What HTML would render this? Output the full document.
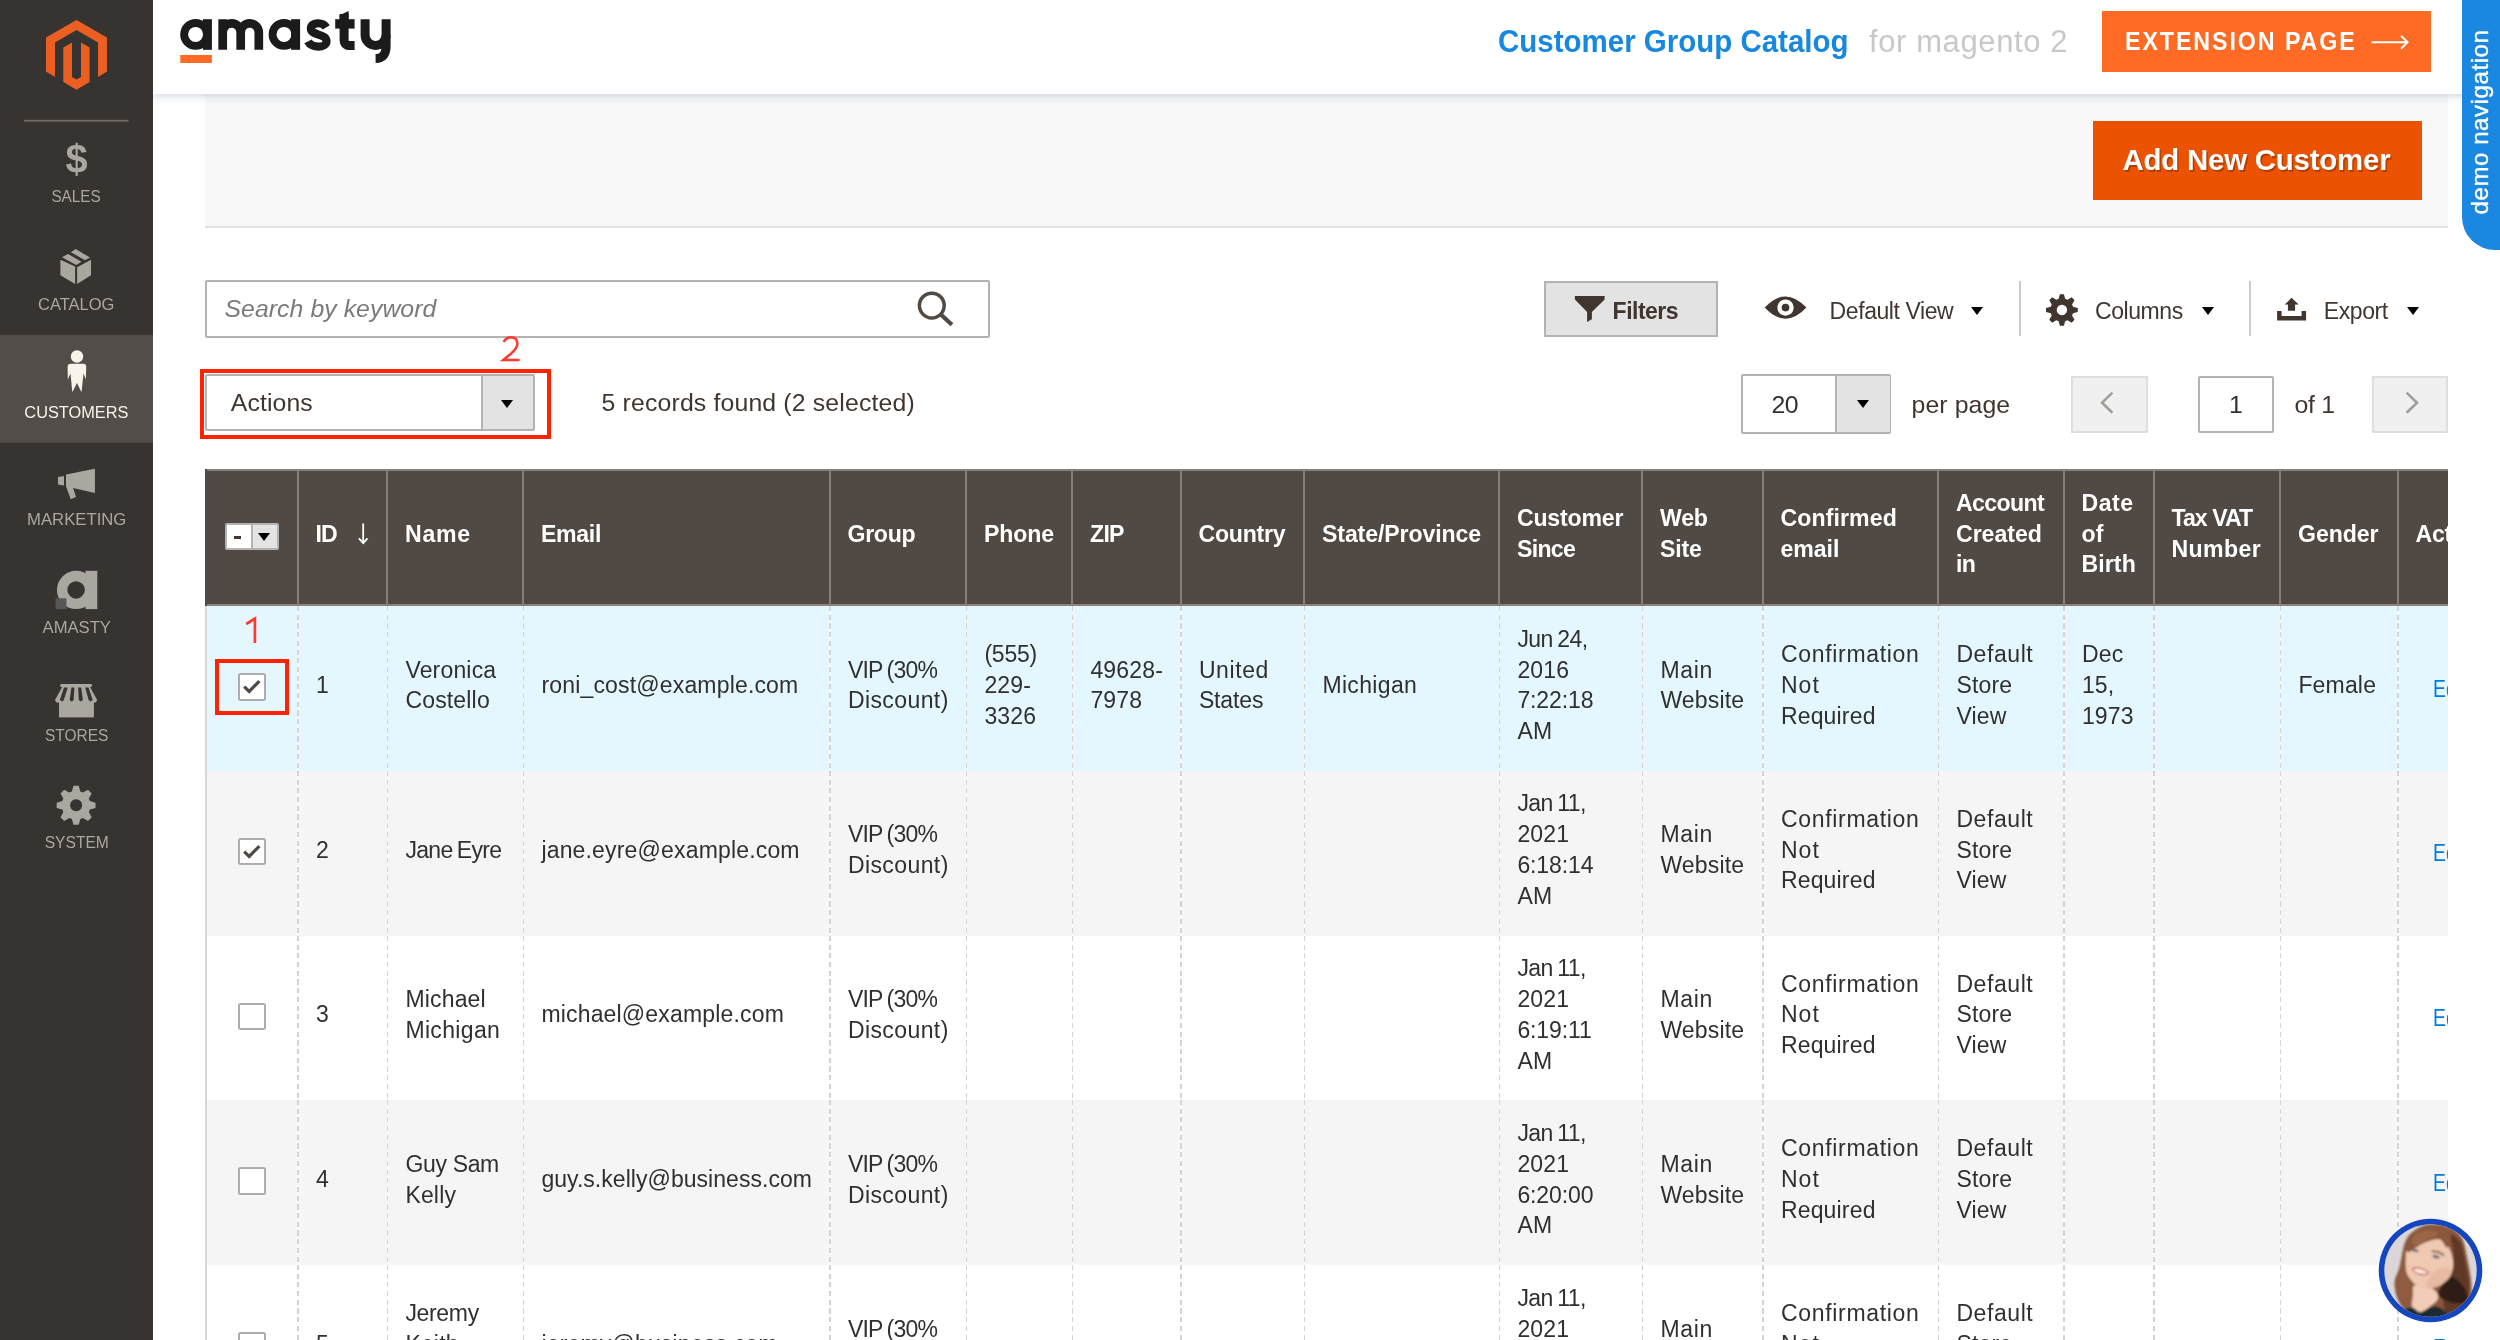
<!DOCTYPE html><html><head><meta charset='utf-8'><title>Customers</title><style>
*{box-sizing:border-box;margin:0;padding:0}
html,body{width:2500px;height:1340px;background:#fff}
body{position:relative;font-family:"Liberation Sans",sans-serif;color:#303030;-webkit-font-smoothing:antialiased}
#pg{position:absolute;left:0;top:0;width:2500px;height:1340px;overflow:hidden;will-change:transform;background:#fff}
.abs{position:absolute}
.t{position:absolute;white-space:nowrap;line-height:1}
#sidebar{position:absolute;left:0;top:0;width:153px;height:1340px;background:#373330;z-index:5}
.ml{position:absolute;left:0;width:153px;text-align:center;font-size:17.4px;line-height:20px;color:#aaa6a0;white-space:nowrap}
.ml span{display:inline-block;transform-origin:50% 50%}
#hdr{position:absolute;left:153px;top:0;width:2347px;height:94px;background:#fff;z-index:3;box-shadow:0 2px 8.5px rgba(120,140,160,.36)}
#gray{position:absolute;left:205px;top:94px;width:2243px;height:133.5px;background:#f8f8f8;border-bottom:2px solid #e3e3e3}
.th{position:absolute;top:0;height:137px;border-left:2px solid #857e7a;color:#fff;font-weight:700;font-size:23.1px;line-height:30.4px;display:flex;align-items:center;padding-left:16.6px;padding-bottom:7.6px;white-space:nowrap}
.row{position:absolute;left:205px;width:2243px;height:164.8px;overflow:hidden}
.vs{position:absolute;left:0;top:0;width:1.74px;height:100%;background:repeating-linear-gradient(to bottom,#d4d4d4 0,#d4d4d4 5.1px,rgba(255,255,255,.7) 5.1px,rgba(255,255,255,.7) 8.7px)}
.td{position:absolute;top:0;height:164.8px;border-left:1px solid transparent;font-size:23px;line-height:30.8px;display:flex;align-items:center;padding-left:18.4px;padding-bottom:6.2px;white-space:nowrap;letter-spacing:.17px;color:#303030}
i{font-style:normal}
.cb{position:absolute;left:33px;width:27.6px;height:27.6px;border:2px solid #adadad;border-radius:2.5px;background:#fff}
.tri{position:absolute;width:0;height:0;border-left:6.9px solid transparent;border-right:6.9px solid transparent;border-top:8.6px solid #000}
.tb{font-size:23px;color:#41362f;letter-spacing:-.42px}
</style></head><body><div id='pg'>
<div id='sidebar'>
<svg class='abs' style='left:0;top:0' width='153' height='900' viewBox='0 0 153 900'>
<path fill='#eb5f22' d='M76.5,20 L107,37.5 L107,71.5 L98,77 L98,42.6 L76.5,30 L55,42.6 L55,77 L46,71.5 L46,37.5Z'/>
<path fill='#eb5f22' d='M63.3,47.5 L72,42.5 L72,77 L76.5,79.6 L81,77 L81,42.5 L89.6,47.5 L89.6,82 L76.5,89.8 L63.3,82Z'/>
<rect x='24' y='119.8' width='104.5' height='1.8' fill='#736b66'/>
<rect x='0' y='335' width='153' height='107.7' fill='#524d49'/>
<g fill='#aaa6a0'>
<path d='M60.4,259.7 L75.1,266.6 L75.1,283.9 L60.4,275.2Z'/>
<path d='M77.1,267.2 L91,259.7 L91,275.2 L77.1,283.9Z'/>
<path d='M62,257.3 L68,253.9 L81.4,261.8 L76.3,265Z'/>
<path d='M70.9,252.2 L75.7,249 L90,257.6 L85,260.3Z'/>
<path d='M58,476.9 L64,475.9 L64,485.6 L58,484.4Z'/>
<path d='M66,474.5 L94.9,468.7 L94.9,493 L73.1,487.9 L76,497 L70.7,499.2 L66,486.3Z'/>
<circle cx='76.1' cy='589.95' r='19.15'/><rect x='85.5' y='570.8' width='11.8' height='38.3'/><circle cx='76.1' cy='589.95' r='8.7' fill='#373330'/>
<rect x='60.3' y='684.1' width='31.6' height='2.9' rx='1'/>
<path d='M62.3,686.8 L89.9,686.8 L96.9,699.5 Q97.2,702.6 94.5,702.6 L57.7,702.6 Q55,702.6 55.3,699.5Z'/>
<rect x='59' y='702' width='34.9' height='15.4'/>
</g>
<path fill='#373330' d='M64.0,687.5 L67.7,687.5 L64.0,699.5 Q62.0,703.5 60.0,699.5Z'/>
<path fill='#373330' d='M71.4,687.5 L74.4,687.5 L73.7,699.5 Q71.7,703.5 69.7,699.5Z'/>
<path fill='#373330' d='M78.1,687.5 L81.2,687.5 L82.8,699.5 Q80.8,703.5 78.8,699.5Z'/>
<path fill='#373330' d='M85.2,687.5 L88.5,687.5 L92.5,699.5 Q90.5,703.5 88.5,699.5Z'/>
<rect x='55.6' y='598.3' width='10.8' height='10.8' fill='#575757'/>
<path fill='#aaa6a0' fill-rule='evenodd' d='M71.87,791.54 L73.49,785.87 L78.71,785.87 L80.33,791.54 L82.84,792.57 L87.99,789.72 L91.68,793.41 L88.83,798.56 L89.86,801.07 L95.53,802.69 L95.53,807.91 L89.86,809.53 L88.83,812.04 L91.68,817.19 L87.99,820.88 L82.84,818.03 L80.33,819.06 L78.71,824.73 L73.49,824.73 L71.87,819.06 L69.36,818.03 L64.21,820.88 L60.52,817.19 L63.37,812.04 L62.34,809.53 L56.67,807.91 L56.67,802.69 L62.34,801.07 L63.37,798.56 L60.52,793.41 L64.21,789.72 L69.36,792.57Z M76.1,799.3 a6,6 0 1 0 0.01,0Z'/>
<g fill='#f7f3eb'><circle cx='77' cy='356.5' r='6.2'/>
<path d='M71,363.8 L83.2,363.8 Q86.2,363.8 86.2,366.9 L85.9,379.4 L83.5,373.6 L81.5,392.2 L77,383 L72.3,392.2 L70.5,373.6 L67.8,379.4 L67.6,366.9 Q67.6,363.8 71,363.8Z'/></g>
</svg>
<div class='t' style='left:0;width:153px;text-align:center;top:136px;font-size:39.8px;font-weight:700;color:#aaa6a0;line-height:46px'>$</div>
<div class='ml' style='top:186.0px;color:#aaa6a0'><span style='transform:scaleX(0.879)'>SALES</span></div>
<div class='ml' style='top:293.9px;color:#aaa6a0'><span style='transform:scaleX(0.948)'>CATALOG</span></div>
<div class='ml' style='top:401.6px;color:#f7f3eb'><span style='transform:scaleX(0.940)'>CUSTOMERS</span></div>
<div class='ml' style='top:508.7px;color:#aaa6a0'><span style='transform:scaleX(0.961)'>MARKETING</span></div>
<div class='ml' style='top:616.9px;color:#aaa6a0'><span style='transform:scaleX(0.957)'>AMASTY</span></div>
<div class='ml' style='top:724.6px;color:#aaa6a0'><span style='transform:scaleX(0.891)'>STORES</span></div>
<div class='ml' style='top:831.9px;color:#aaa6a0'><span style='transform:scaleX(0.896)'>SYSTEM</span></div>
</div>
<div id='hdr'></div>
<div class='abs' style='left:0;top:0;width:2500px;height:94px;z-index:4'>
<svg class='abs' style='left:170px;top:0' width='240' height='80' viewBox='170 0 240 80'>
<g fill='none' stroke='#1b1b1b'>
<circle cx='195.6' cy='34.4' r='11.45' stroke-width='7.9'/>
<path d='M207.4,19.2 V49.8' stroke-width='9'/>
<path d='M222.7,19.2 V49.8 M222.7,32.4 a9,9 0 0 1 18,0 V49.8 M240.7,32.4 a9.05,9.05 0 0 1 18.1,0 V49.8' stroke-width='8.7'/>
<circle cx='284' cy='34.4' r='11.45' stroke-width='7.9'/>
<path d='M295.6,19.2 V49.8' stroke-width='9'/>
<path d='M326.3,27.4 C322.8,21.6 310.6,21.8 310.9,28.8 C311.2,35.8 326.6,33.4 326.5,41.2 C326.3,48.6 311.4,48.4 308,41.4' stroke-width='8.2'/>
<path d='M344.1,14 V39.5 Q344.1,45.6 350,45.6 H354.6' stroke-width='9'/>
<path d='M335.2,23.9 H354.6' stroke-width='9.4'/>
<path d='M365.1,19.2 V35 a10.5,10.5 0 0 0 21,0' stroke-width='9'/>
<path d='M386.1,19.2 V46 Q386.1,58.5 375.6,58.6' stroke-width='9'/>
</g>
<path fill='#1b1b1b' d='M339.6,15.2 L348.6,11 L348.6,20 L339.6,20Z'/>
<rect x='180.3' y='55' width='31.6' height='8' fill='#ff6a24'/>
</svg>
<div class='t' style='left:1497.5px;top:25.6px;font-size:31px;font-weight:700;color:#1787e0;letter-spacing:0;transform-origin:0 50%;transform:scaleX(.951)'>Customer Group Catalog</div>
<div class='t' style='left:1869px;top:25.6px;font-size:31px;color:#c8c8c8;letter-spacing:.6px'>for magento 2</div>
<div class='abs' style='left:2102.3px;top:11.3px;width:328.3px;height:60.5px;background:#ff6a24'></div>
<div class='t' style='left:2125px;top:28.9px;font-size:25.4px;font-weight:700;color:#fff;letter-spacing:2.1px;transform-origin:0 50%;transform:scaleX(.915)'>EXTENSION PAGE</div>
<svg class='abs' style='left:2368px;top:30px' width='46' height='26' viewBox='2368 30 46 26'><path d='M2371.6,42.3 H2407.2 M2401,35.8 L2407.6,42.3 L2401,48.8' fill='none' stroke='#fff' stroke-width='1.9'/></svg>
</div>
<div class='abs' style='left:2461.7px;top:0;width:60px;height:250px;background:#1a88e1;border-radius:0 0 0 33px;z-index:6'></div>
<div class='t' style='left:2480px;top:122px;z-index:7;font-size:24px;color:#fff;transform:translate(-50%,-50%) rotate(-90deg);letter-spacing:.58px;-webkit-text-stroke:.35px #fff'>demo navigation</div>
<div id='gray'></div>
<div class='abs' style='left:2093px;top:120.7px;width:328.8px;height:79.5px;background:#eb5202'></div>
<div class='t' style='left:2122.5px;top:145px;font-size:29.4px;font-weight:700;color:#fff;letter-spacing:-.2px;text-shadow:1.5px 1.5px 0 rgba(0,0,0,.25)'>Add New Customer</div>
<div class='abs' style='left:205px;top:280px;width:784.5px;height:57.5px;border:2px solid #b3b3b3;border-radius:2px;background:#fff'></div>
<div class='t' style='left:224.5px;top:297px;font-size:24.8px;font-style:italic;color:#7a7a7a;letter-spacing:.06px'>Search by keyword</div>
<svg class='abs' style='left:910px;top:285px' width='50' height='46' viewBox='910 285 50 46'><circle cx='931.8' cy='305.6' r='12.4' fill='none' stroke='#514943' stroke-width='3.5'/><path d='M940.6,314.2 L951.9,324.7' stroke='#514943' stroke-width='4.2' fill='none'/></svg>
<div class='abs' style='left:1543.6px;top:280.6px;width:174px;height:56.8px;background:#e3e3e3;border:2px solid #b3b3b3'></div>
<svg class='abs' style='left:1570px;top:290px' width='40' height='36' viewBox='1570 290 40 36'><path fill='#41362f' d='M1574.9,296.1 L1604.6,296.1 L1604.6,299.4 L1591.9,312.1 L1591.9,319.3 L1587.1,321.9 L1587.1,312.1 L1574.9,299.4Z'/></svg>
<div class='t tb' style='left:1612.6px;top:299.9px;font-weight:700;font-size:23px;letter-spacing:-.5px'>Filters</div>
<svg class='abs' style='left:1760px;top:290px' width='52' height='36' viewBox='1760 290 52 36'><path fill='#41362f' fill-rule='evenodd' d='M1764.7,307.6 Q1785.5,285.2 1806.4,307.6 Q1785.5,330 1764.7,307.6Z M1785.5,299.5 a8.1,8.1 0 1 0 0.01,0Z'/><circle cx='1785.5' cy='307.6' r='3.85' fill='#41362f'/></svg>
<div class='t tb' style='left:1829.6px;top:299.9px'>Default View</div>
<div class='tri' style='left:1971.2px;top:307px'></div>
<div class='abs' style='left:2018.8px;top:280.6px;width:1.8px;height:55px;background:#ccc'></div>
<svg class='abs' style='left:2040px;top:290px' width='44' height='40' viewBox='2040 290 44 40'><path fill='#41362f' fill-rule='evenodd' d='M2058.66,298.86 L2059.89,294.13 L2063.91,294.13 L2065.14,298.86 L2067.49,299.83 L2071.71,297.36 L2074.54,300.19 L2072.07,304.41 L2073.04,306.76 L2077.77,307.99 L2077.77,312.01 L2073.04,313.24 L2072.07,315.59 L2074.54,319.81 L2071.71,322.64 L2067.49,320.17 L2065.14,321.14 L2063.91,325.87 L2059.89,325.87 L2058.66,321.14 L2056.31,320.17 L2052.09,322.64 L2049.26,319.81 L2051.73,315.59 L2050.76,313.24 L2046.03,312.01 L2046.03,307.99 L2050.76,306.76 L2051.73,304.41 L2049.26,300.19 L2052.09,297.36 L2056.31,299.83Z M2061.9,304.8 a5.2,5.2 0 1 0 0.01,0Z'/></svg>
<div class='t tb' style='left:2095px;top:299.9px'>Columns</div>
<div class='tri' style='left:2202.1px;top:307px'></div>
<div class='abs' style='left:2249.2px;top:280.6px;width:1.8px;height:55px;background:#ccc'></div>
<svg class='abs' style='left:2272px;top:292px' width='40' height='34' viewBox='2272 292 40 34'><path fill='#41362f' d='M2277.1,311.1 H2281.6 V316.1 H2301.6 V311.1 H2306.1 V320.6 H2277.1Z M2291.5,297.8 L2298.7,304.6 H2295.1 V310.8 H2287.9 V304.6 H2284.8Z'/></svg>
<div class='t tb' style='left:2323.8px;top:299.9px'>Export</div>
<div class='tri' style='left:2407px;top:307px'></div>
<div class='abs' style='left:200px;top:369px;width:351px;height:70px;border:4px solid #ff2300'></div>
<svg class='abs' style='left:495px;top:330px' width='32' height='36' viewBox='495 330 32 36'><path d='M503.6,341.8 Q506.5,337.2 511,337.2 Q517.4,337.4 517.4,343.6 Q517.4,348 511.5,353.2 L503.2,360 H519.6' fill='none' stroke='#ff3a2d' stroke-width='2.5'/></svg>
<div class='abs' style='left:205px;top:374.4px;width:330px;height:56.3px;border:2px solid #b3b3b3;background:#fff;border-radius:2px'></div>
<div class='abs' style='left:480.6px;top:376.2px;width:52.6px;height:52.7px;background:#e3e3e3;border-left:2px solid #b3b3b3'></div>
<div class='t' style='left:230.8px;top:391.3px;font-size:24.8px;color:#41362f;letter-spacing:.1px'>Actions</div>
<div class='tri' style='left:501.3px;top:399.6px'></div>
<div class='t' style='left:601.6px;top:391.3px;font-size:24.8px;color:#41362f;letter-spacing:.16px'>5 records found (2 selected)</div>
<div class='abs' style='left:1741px;top:374.4px;width:150.3px;height:59.2px;border:2px solid #b3b3b3;background:#fff;border-radius:2px'></div>
<div class='abs' style='left:1834.5px;top:376.2px;width:55px;height:55.6px;background:#e3e3e3;border-left:2px solid #b3b3b3'></div>
<div class='t' style='left:1771.5px;top:392.6px;font-size:24.8px;color:#303030;letter-spacing:-.6px'>20</div>
<div class='tri' style='left:1856.6px;top:400px'></div>
<div class='t' style='left:1911.5px;top:392.6px;font-size:24.8px;color:#41362f;letter-spacing:.1px'>per page</div>
<div class='abs' style='left:2071.4px;top:376px;width:76.3px;height:56.6px;background:#f0f0f0;border:2px solid #dedede'></div>
<div class='abs' style='left:2371.6px;top:376px;width:76.4px;height:56.6px;background:#f0f0f0;border:2px solid #dedede'></div>
<svg class='abs' style='left:2090px;top:385px' width='340' height='36' viewBox='2090 385 340 36'><path d='M2112.4,392.6 L2102,402.7 L2112.4,412.8 M2406.6,392.6 L2417,402.7 L2406.6,412.8' fill='none' stroke='#a39e9a' stroke-width='2.6'/></svg>
<div class='abs' style='left:2198px;top:376px;width:76px;height:56.6px;background:#fff;border:2px solid #b3b3b3;border-radius:2px'></div>
<div class='t' style='left:2198px;width:76px;text-align:center;top:392.6px;font-size:24.8px;color:#303030'>1</div>
<div class='t' style='left:2294.5px;top:392.6px;font-size:24.8px;color:#41362f;letter-spacing:-.3px'>of 1</div>
<div class='abs' style='left:205px;top:469px;width:2243px;height:871px;overflow:hidden'>
<div class='abs' style='left:0;top:0;width:2243px;height:136.9px;background:#514943;border-top:2px solid #857e7a;border-bottom:2px solid #8a837f'></div>
<div class='th' style='left:0.0px;width:92.5px;border-left:2px solid #514943;'><span></span></div>
<div class='th' style='left:91.9px;width:89.5px;'><span><i style='letter-spacing:-0.8px'>ID</i></span></div>
<div class='th' style='left:181.4px;width:136.0px;'><span><i style='letter-spacing:0.75px'>Name</i></span></div>
<div class='th' style='left:317.4px;width:306.5px;'><span><i style='letter-spacing:-0.3px'>Email</i></span></div>
<div class='th' style='left:623.9px;width:136.5px;'><span><i style='letter-spacing:-0.3px'>Group</i></span></div>
<div class='th' style='left:760.4px;width:106.0px;'><span><i style='letter-spacing:-0.1px'>Phone</i></span></div>
<div class='th' style='left:866.4px;width:108.5px;'><span><i style='letter-spacing:-0.7px'>ZIP</i></span></div>
<div class='th' style='left:974.9px;width:123.5px;'><span><i style='letter-spacing:-0.25px'>Country</i></span></div>
<div class='th' style='left:1098.4px;width:195.0px;'><span><i style='letter-spacing:-0.1px'>State/Province</i></span></div>
<div class='th' style='left:1293.4px;width:143.0px;'><span><i style='letter-spacing:-0.2px'>Customer</i><br><i style='letter-spacing:-0.7px'>Since</i></span></div>
<div class='th' style='left:1436.4px;width:120.5px;'><span><i style='letter-spacing:-0.2px'>Web</i><br><i style='letter-spacing:-0.2px'>Site</i></span></div>
<div class='th' style='left:1556.9px;width:175.5px;'><span><i style='letter-spacing:0.1px'>Confirmed</i><br><i style='letter-spacing:-0.05px'>email</i></span></div>
<div class='th' style='left:1732.4px;width:125.5px;'><span><i style='letter-spacing:-0.6px'>Account</i><br><i style='letter-spacing:-0.03px'>Created</i><br><i style='letter-spacing:-0.6px'>in</i></span></div>
<div class='th' style='left:1857.9px;width:90.0px;'><span><i style='letter-spacing:0.5px'>Date</i><br><i style='letter-spacing:0.1px'>of</i><br><i style='letter-spacing:0.1px'>Birth</i></span></div>
<div class='th' style='left:1947.9px;width:126.5px;'><span><i style='letter-spacing:-0.95px'>Tax VAT</i><br><i style='letter-spacing:0.4px'>Number</i></span></div>
<div class='th' style='left:2074.4px;width:117.5px;'><span><i style='letter-spacing:-0.05px'>Gender</i></span></div>
<div class='th' style='left:2191.9px;width:162.5px;'><span><i style='letter-spacing:-0.2px'>Actions</i></span></div>
<svg class='abs' style='left:150px;top:46px' width='20' height='34' viewBox='355 515 20 34'><path d='M363.2,523.6 V543.2 M358.9,538.3 L363.2,543.2 L367.5,538.3' fill='none' stroke='#fff' stroke-width='1.8'/></svg>
<div class='abs' style='left:20px;top:54px;width:53.6px;height:26.8px;background:#fff;border:2px solid #b3b3b3;border-radius:2px'></div>
<div class='abs' style='left:46.4px;top:55.6px;width:25.6px;height:23.6px;background:#e3e3e3;border-left:2px solid #b3b3b3'></div>
<div class='abs' style='left:29.3px;top:67.2px;width:6.4px;height:2.6px;background:#41362f'></div>
<div class='tri' style='left:52.6px;top:63.5px;border-left-width:6.6px;border-right-width:6.6px;border-top-width:8.2px'></div>
<div class='row' style='left:0;top:137.00px;background:#e5f7fe'>
<div class='td' style='left:0.0px;width:92.5px;border-left:2px solid #d6d6d6;'><span></span></div>
<div class='td' style='left:91.5px;width:89.5px;'><div class='vs' style='left:-.45px'></div><span>1</span></div>
<div class='td' style='left:181.0px;width:136.0px;'><div class='vs' style='left:-.45px'></div><span>Veronica<br>Costello</span></div>
<div class='td' style='left:317.0px;width:306.5px;'><div class='vs' style='left:-.45px'></div><span>roni_cost@example.com</span></div>
<div class='td' style='left:623.5px;width:136.5px;'><div class='vs' style='left:-.45px'></div><span><i style='letter-spacing:-.78px;word-spacing:-1.2px'>VIP (30%</i><br><i style='letter-spacing:0.41px'>Discount)</i></span></div>
<div class='td' style='left:760.0px;width:106.0px;'><div class='vs' style='left:-.45px'></div><span><i style='letter-spacing:-0.2px'>(555)</i><br>229-<br>3326</span></div>
<div class='td' style='left:866.0px;width:108.5px;'><div class='vs' style='left:-.45px'></div><span>49628-<br>7978</span></div>
<div class='td' style='left:974.5px;width:123.5px;'><div class='vs' style='left:-.45px'></div><span><i style='letter-spacing:0.6px'>United</i><br><i style='letter-spacing:-0.13px'>States</i></span></div>
<div class='td' style='left:1098.0px;width:195.0px;'><div class='vs' style='left:-.45px'></div><span><i style='letter-spacing:0.35px'>Michigan</i></span></div>
<div class='td' style='left:1293.0px;width:143.0px;'><div class='vs' style='left:-.45px'></div><span><i style='letter-spacing:-.55px;word-spacing:-1.4px'>Jun 24,</i><br>2016<br><i style='letter-spacing:-0.1px'>7:22:18</i><br>AM</span></div>
<div class='td' style='left:1436.0px;width:120.5px;'><div class='vs' style='left:-.45px'></div><span><i style='letter-spacing:0.65px'>Main</i><br>Website</span></div>
<div class='td' style='left:1556.5px;width:175.5px;'><div class='vs' style='left:-.45px'></div><span><i style='letter-spacing:0.69px'>Confirmation</i><br><i style='letter-spacing:1.1px'>Not</i><br>Required</span></div>
<div class='td' style='left:1732.0px;width:125.5px;'><div class='vs' style='left:-.45px'></div><span><i style='letter-spacing:0.58px'>Default</i><br>Store<br>View</span></div>
<div class='td' style='left:1857.5px;width:90.0px;'><div class='vs' style='left:-.45px'></div><span>Dec<br>15,<br>1973</span></div>
<div class='td' style='left:1947.5px;width:126.5px;'><div class='vs' style='left:-.45px'></div><span></span></div>
<div class='td' style='left:2074.0px;width:117.5px;'><div class='vs' style='left:-.45px'></div><span>Female</span></div>
<div class='td' style='left:2191.5px;width:162.5px;'><div class='vs' style='left:-.45px'></div><span><span style='color:#007bdb;margin-left:17.6px;position:relative;top:3.6px;display:inline-block;transform-origin:0 50%;transform:scaleX(.84)'>Edit</span></span></div>
<div class='cb' style='top:67px'><svg width='24' height='24' viewBox='0 0 24 24' style='position:absolute;left:0;top:0'><path d='M4.2,11.6 L9.2,16.4 L19.4,6.2' fill='none' stroke='#514943' stroke-width='3.2'/></svg></div>
</div>
<div class='row' style='left:0;top:301.75px;background:#f5f5f5'>
<div class='td' style='left:0.0px;width:92.5px;border-left:2px solid #d6d6d6;'><span></span></div>
<div class='td' style='left:91.5px;width:89.5px;'><div class='vs' style='left:-.45px'></div><span>2</span></div>
<div class='td' style='left:181.0px;width:136.0px;'><div class='vs' style='left:-.45px'></div><span><i style='letter-spacing:-.68px;word-spacing:-1.4px'>Jane Eyre</i></span></div>
<div class='td' style='left:317.0px;width:306.5px;'><div class='vs' style='left:-.45px'></div><span>jane.eyre@example.com</span></div>
<div class='td' style='left:623.5px;width:136.5px;'><div class='vs' style='left:-.45px'></div><span><i style='letter-spacing:-.78px;word-spacing:-1.2px'>VIP (30%</i><br><i style='letter-spacing:0.41px'>Discount)</i></span></div>
<div class='td' style='left:760.0px;width:106.0px;'><div class='vs' style='left:-.45px'></div><span></span></div>
<div class='td' style='left:866.0px;width:108.5px;'><div class='vs' style='left:-.45px'></div><span></span></div>
<div class='td' style='left:974.5px;width:123.5px;'><div class='vs' style='left:-.45px'></div><span></span></div>
<div class='td' style='left:1098.0px;width:195.0px;'><div class='vs' style='left:-.45px'></div><span></span></div>
<div class='td' style='left:1293.0px;width:143.0px;'><div class='vs' style='left:-.45px'></div><span><i style='letter-spacing:-.55px;word-spacing:-1.4px'>Jan 11,</i><br>2021<br><i style='letter-spacing:-0.1px'>6:18:14</i><br>AM</span></div>
<div class='td' style='left:1436.0px;width:120.5px;'><div class='vs' style='left:-.45px'></div><span><i style='letter-spacing:0.65px'>Main</i><br>Website</span></div>
<div class='td' style='left:1556.5px;width:175.5px;'><div class='vs' style='left:-.45px'></div><span><i style='letter-spacing:0.69px'>Confirmation</i><br><i style='letter-spacing:1.1px'>Not</i><br>Required</span></div>
<div class='td' style='left:1732.0px;width:125.5px;'><div class='vs' style='left:-.45px'></div><span><i style='letter-spacing:0.58px'>Default</i><br>Store<br>View</span></div>
<div class='td' style='left:1857.5px;width:90.0px;'><div class='vs' style='left:-.45px'></div><span></span></div>
<div class='td' style='left:1947.5px;width:126.5px;'><div class='vs' style='left:-.45px'></div><span></span></div>
<div class='td' style='left:2074.0px;width:117.5px;'><div class='vs' style='left:-.45px'></div><span></span></div>
<div class='td' style='left:2191.5px;width:162.5px;'><div class='vs' style='left:-.45px'></div><span><span style='color:#007bdb;margin-left:17.6px;position:relative;top:3.6px;display:inline-block;transform-origin:0 50%;transform:scaleX(.84)'>Edit</span></span></div>
<div class='cb' style='top:67px'><svg width='24' height='24' viewBox='0 0 24 24' style='position:absolute;left:0;top:0'><path d='M4.2,11.6 L9.2,16.4 L19.4,6.2' fill='none' stroke='#514943' stroke-width='3.2'/></svg></div>
</div>
<div class='row' style='left:0;top:466.50px;background:#ffffff'>
<div class='td' style='left:0.0px;width:92.5px;border-left:2px solid #d6d6d6;'><span></span></div>
<div class='td' style='left:91.5px;width:89.5px;'><div class='vs' style='left:-.45px'></div><span>3</span></div>
<div class='td' style='left:181.0px;width:136.0px;'><div class='vs' style='left:-.45px'></div><span>Michael<br><i style='letter-spacing:0.35px'>Michigan</i></span></div>
<div class='td' style='left:317.0px;width:306.5px;'><div class='vs' style='left:-.45px'></div><span>michael@example.com</span></div>
<div class='td' style='left:623.5px;width:136.5px;'><div class='vs' style='left:-.45px'></div><span><i style='letter-spacing:-.78px;word-spacing:-1.2px'>VIP (30%</i><br><i style='letter-spacing:0.41px'>Discount)</i></span></div>
<div class='td' style='left:760.0px;width:106.0px;'><div class='vs' style='left:-.45px'></div><span></span></div>
<div class='td' style='left:866.0px;width:108.5px;'><div class='vs' style='left:-.45px'></div><span></span></div>
<div class='td' style='left:974.5px;width:123.5px;'><div class='vs' style='left:-.45px'></div><span></span></div>
<div class='td' style='left:1098.0px;width:195.0px;'><div class='vs' style='left:-.45px'></div><span></span></div>
<div class='td' style='left:1293.0px;width:143.0px;'><div class='vs' style='left:-.45px'></div><span><i style='letter-spacing:-.55px;word-spacing:-1.4px'>Jan 11,</i><br>2021<br><i style='letter-spacing:-0.1px'>6:19:11</i><br>AM</span></div>
<div class='td' style='left:1436.0px;width:120.5px;'><div class='vs' style='left:-.45px'></div><span><i style='letter-spacing:0.65px'>Main</i><br>Website</span></div>
<div class='td' style='left:1556.5px;width:175.5px;'><div class='vs' style='left:-.45px'></div><span><i style='letter-spacing:0.69px'>Confirmation</i><br><i style='letter-spacing:1.1px'>Not</i><br>Required</span></div>
<div class='td' style='left:1732.0px;width:125.5px;'><div class='vs' style='left:-.45px'></div><span><i style='letter-spacing:0.58px'>Default</i><br>Store<br>View</span></div>
<div class='td' style='left:1857.5px;width:90.0px;'><div class='vs' style='left:-.45px'></div><span></span></div>
<div class='td' style='left:1947.5px;width:126.5px;'><div class='vs' style='left:-.45px'></div><span></span></div>
<div class='td' style='left:2074.0px;width:117.5px;'><div class='vs' style='left:-.45px'></div><span></span></div>
<div class='td' style='left:2191.5px;width:162.5px;'><div class='vs' style='left:-.45px'></div><span><span style='color:#007bdb;margin-left:17.6px;position:relative;top:3.6px;display:inline-block;transform-origin:0 50%;transform:scaleX(.84)'>Edit</span></span></div>
<div class='cb' style='top:67px'></div>
</div>
<div class='row' style='left:0;top:631.25px;background:#f5f5f5'>
<div class='td' style='left:0.0px;width:92.5px;border-left:2px solid #d6d6d6;'><span></span></div>
<div class='td' style='left:91.5px;width:89.5px;'><div class='vs' style='left:-.45px'></div><span>4</span></div>
<div class='td' style='left:181.0px;width:136.0px;'><div class='vs' style='left:-.45px'></div><span><i style='letter-spacing:-0.33px'>Guy Sam</i><br>Kelly</span></div>
<div class='td' style='left:317.0px;width:306.5px;'><div class='vs' style='left:-.45px'></div><span><i style='letter-spacing:0.04px'>guy.s.kelly@business.com</i></span></div>
<div class='td' style='left:623.5px;width:136.5px;'><div class='vs' style='left:-.45px'></div><span><i style='letter-spacing:-.78px;word-spacing:-1.2px'>VIP (30%</i><br><i style='letter-spacing:0.41px'>Discount)</i></span></div>
<div class='td' style='left:760.0px;width:106.0px;'><div class='vs' style='left:-.45px'></div><span></span></div>
<div class='td' style='left:866.0px;width:108.5px;'><div class='vs' style='left:-.45px'></div><span></span></div>
<div class='td' style='left:974.5px;width:123.5px;'><div class='vs' style='left:-.45px'></div><span></span></div>
<div class='td' style='left:1098.0px;width:195.0px;'><div class='vs' style='left:-.45px'></div><span></span></div>
<div class='td' style='left:1293.0px;width:143.0px;'><div class='vs' style='left:-.45px'></div><span><i style='letter-spacing:-.55px;word-spacing:-1.4px'>Jan 11,</i><br>2021<br><i style='letter-spacing:-0.1px'>6:20:00</i><br>AM</span></div>
<div class='td' style='left:1436.0px;width:120.5px;'><div class='vs' style='left:-.45px'></div><span><i style='letter-spacing:0.65px'>Main</i><br>Website</span></div>
<div class='td' style='left:1556.5px;width:175.5px;'><div class='vs' style='left:-.45px'></div><span><i style='letter-spacing:0.69px'>Confirmation</i><br><i style='letter-spacing:1.1px'>Not</i><br>Required</span></div>
<div class='td' style='left:1732.0px;width:125.5px;'><div class='vs' style='left:-.45px'></div><span><i style='letter-spacing:0.58px'>Default</i><br>Store<br>View</span></div>
<div class='td' style='left:1857.5px;width:90.0px;'><div class='vs' style='left:-.45px'></div><span></span></div>
<div class='td' style='left:1947.5px;width:126.5px;'><div class='vs' style='left:-.45px'></div><span></span></div>
<div class='td' style='left:2074.0px;width:117.5px;'><div class='vs' style='left:-.45px'></div><span></span></div>
<div class='td' style='left:2191.5px;width:162.5px;'><div class='vs' style='left:-.45px'></div><span><span style='color:#007bdb;margin-left:17.6px;position:relative;top:3.6px;display:inline-block;transform-origin:0 50%;transform:scaleX(.84)'>Edit</span></span></div>
<div class='cb' style='top:67px'></div>
</div>
<div class='row' style='left:0;top:796.00px;background:#ffffff'>
<div class='td' style='left:0.0px;width:92.5px;border-left:2px solid #d6d6d6;'><span></span></div>
<div class='td' style='left:91.5px;width:89.5px;'><div class='vs' style='left:-.45px'></div><span>5</span></div>
<div class='td' style='left:181.0px;width:136.0px;'><div class='vs' style='left:-.45px'></div><span><i style='letter-spacing:-0.33px'>Jeremy</i><br>Keith<br>Jr</span></div>
<div class='td' style='left:317.0px;width:306.5px;'><div class='vs' style='left:-.45px'></div><span>jeremy@business.com</span></div>
<div class='td' style='left:623.5px;width:136.5px;'><div class='vs' style='left:-.45px'></div><span><i style='letter-spacing:-.78px;word-spacing:-1.2px'>VIP (30%</i><br><i style='letter-spacing:0.41px'>Discount)</i></span></div>
<div class='td' style='left:760.0px;width:106.0px;'><div class='vs' style='left:-.45px'></div><span></span></div>
<div class='td' style='left:866.0px;width:108.5px;'><div class='vs' style='left:-.45px'></div><span></span></div>
<div class='td' style='left:974.5px;width:123.5px;'><div class='vs' style='left:-.45px'></div><span></span></div>
<div class='td' style='left:1098.0px;width:195.0px;'><div class='vs' style='left:-.45px'></div><span></span></div>
<div class='td' style='left:1293.0px;width:143.0px;'><div class='vs' style='left:-.45px'></div><span><i style='letter-spacing:-.55px;word-spacing:-1.4px'>Jan 11,</i><br>2021<br><i style='letter-spacing:-0.1px'>6:20:44</i><br>AM</span></div>
<div class='td' style='left:1436.0px;width:120.5px;'><div class='vs' style='left:-.45px'></div><span><i style='letter-spacing:0.65px'>Main</i><br>Website</span></div>
<div class='td' style='left:1556.5px;width:175.5px;'><div class='vs' style='left:-.45px'></div><span><i style='letter-spacing:0.69px'>Confirmation</i><br><i style='letter-spacing:1.1px'>Not</i><br>Required</span></div>
<div class='td' style='left:1732.0px;width:125.5px;'><div class='vs' style='left:-.45px'></div><span><i style='letter-spacing:0.58px'>Default</i><br>Store<br>View</span></div>
<div class='td' style='left:1857.5px;width:90.0px;'><div class='vs' style='left:-.45px'></div><span></span></div>
<div class='td' style='left:1947.5px;width:126.5px;'><div class='vs' style='left:-.45px'></div><span></span></div>
<div class='td' style='left:2074.0px;width:117.5px;'><div class='vs' style='left:-.45px'></div><span></span></div>
<div class='td' style='left:2191.5px;width:162.5px;'><div class='vs' style='left:-.45px'></div><span><span style='color:#007bdb;margin-left:17.6px;position:relative;top:3.6px;display:inline-block;transform-origin:0 50%;transform:scaleX(.84)'>Edit</span></span></div>
<div class='cb' style='top:67px'></div>
</div>
</div>
<div class='abs' style='left:215.3px;top:659px;width:74px;height:56px;border:4px solid #ff2300'></div>
<svg class='abs' style='left:240px;top:612px' width='24' height='36' viewBox='240 612 24 36'><path d='M246.2,624 L254.9,618.6 V643' fill='none' stroke='#ff3a2d' stroke-width='2.7'/></svg>
<svg class='abs' style='left:2374px;top:1214px;z-index:8' width='114' height='114' viewBox='0 0 114 114'>
<defs><clipPath id='av'><circle cx='56.5' cy='56.5' r='46.2'/></clipPath><filter id='bl' x='-10%' y='-10%' width='120%' height='120%'><feGaussianBlur stdDeviation='1.1'/></filter></defs>
<circle cx='56.5' cy='56.5' r='51.8' fill='#1447bf'/>
<g clip-path='url(#av)'><rect width='114' height='114' fill='#dbd6d7'/><g filter='url(#bl)'>
<path fill='#8a583c' d='M31.8,26.4 C34.9,19.9 39.9,16.6 44.3,13.9 C48.8,11.2 53.3,10.4 58.7,10.3 C64.0,10.2 71.6,11.1 76.6,13.5 C81.5,15.8 85.4,19.2 88.2,24.6 C91.0,30.1 92.1,39.0 93.6,46.1 C95.1,53.3 96.7,61.1 97.2,67.6 C97.6,74.2 98.2,79.9 96.3,85.5 C94.3,91.2 90.3,97.9 85.5,101.6 C80.8,105.4 75.1,107.6 67.6,107.9 C60.2,108.2 47.8,106.6 40.8,103.4 C33.7,100.3 28.9,94.8 25.5,89.1 C22.2,83.4 20.6,75.4 20.6,69.4 C20.6,63.4 23.7,60.5 25.5,53.3 C27.4,46.1 28.7,33.0 31.8,26.4Z'/>
<path fill='#5e3826' d='M76.6,21.1 C77.8,19.3 83.9,23.5 86.4,28.2 C89.0,33.0 90.3,42.4 91.8,49.7 C93.3,57.0 95.5,64.9 95.4,72.1 C95.2,79.3 94.6,87.8 90.9,92.7 C87.2,97.6 76.6,104.3 73.0,101.6 C69.4,99.0 68.8,83.7 69.4,76.6 C70.0,69.4 74.9,64.9 76.6,58.7 C78.2,52.4 79.3,45.2 79.3,39.0 C79.3,32.7 75.4,22.9 76.6,21.1Z'/>
<path fill='#2a1a12' opacity='.9' d='M73.0,61.4 C75.2,60.5 79.0,62.7 81.9,64.9 C84.9,67.2 89.1,71.2 90.9,74.8 C92.7,78.4 94.2,84.0 92.7,86.4 C91.2,88.8 85.8,89.3 81.9,89.1 C78.1,89.0 72.4,87.2 69.4,85.5 C66.4,83.9 64.2,81.8 64.0,79.3 C63.9,76.7 67.0,73.3 68.5,70.3 C70.0,67.3 70.8,62.2 73.0,61.4Z'/>
<path fill='#f1ccb6' d='M40.8,71.2 C44.0,70.2 54.8,72.5 58.7,74.8 C62.5,77.0 64.9,81.3 64.0,84.6 C63.1,87.9 56.6,92.1 53.3,94.5 C50.0,96.9 46.9,99.1 44.3,99.0 C41.8,98.8 39.0,96.6 38.1,93.6 C37.2,90.6 38.5,84.8 39.0,81.0 C39.4,77.3 37.5,72.2 40.8,71.2Z'/>
<path fill='#efc9b2' d='M33.6,34.5 C36.3,30.5 41.1,27.3 46.1,25.5 C51.2,23.8 59.3,22.4 64.0,23.8 C68.8,25.1 72.2,29.3 74.8,33.6 C77.3,37.9 79.3,44.6 79.3,49.7 C79.3,54.8 77.6,60.2 74.8,64.0 C71.9,67.9 67.0,71.5 62.2,73.0 C57.5,74.5 50.6,74.5 46.1,73.0 C41.7,71.5 38.1,67.9 35.4,64.0 C32.7,60.2 30.3,54.6 30.0,49.7 C29.7,44.8 30.9,38.5 33.6,34.5Z'/>
<path fill='#e5b39a' opacity='.7' d='M58.7,58.7 C62.2,55.4 70.0,52.7 73.0,53.3 C76.0,53.9 78.1,59.1 76.6,62.2 C75.1,65.4 68.2,70.3 64.0,72.1 C59.9,73.9 52.4,75.2 51.5,73.0 C50.6,70.8 55.1,62.0 58.7,58.7Z'/>
<path fill='#8a583c' d='M31.8,28.2 C33.9,24.5 40.8,18.1 46.1,15.7 C51.5,13.3 59.0,12.7 64.0,13.9 C69.1,15.1 75.1,19.6 76.6,22.9 C78.1,26.1 74.8,33.2 73.0,33.6 C71.2,34.0 69.4,26.4 65.8,25.5 C62.2,24.6 55.7,26.7 51.5,28.2 C47.3,29.7 43.7,32.9 40.8,34.5 C37.8,36.1 35.1,39.1 33.6,38.1 C32.1,37.0 29.7,32.0 31.8,28.2Z'/>
<path fill='#a06a48' opacity='.8' d='M39.0,22.9 C40.8,20.3 47.3,17.2 51.5,16.6 C55.7,16.0 63.7,17.8 64.0,19.3 C64.3,20.8 57.2,23.5 53.3,25.5 C49.4,27.6 43.2,32.3 40.8,31.8 C38.4,31.4 37.2,25.4 39.0,22.9Z'/>
<path fill='#8f5c40' d='M31.8,33.6 C31.2,33.6 29.7,47.6 28.2,53.3 C26.7,59.0 23.3,62.2 22.9,67.6 C22.4,73.0 23.5,81.0 25.5,85.5 C27.6,90.0 33.3,95.2 35.4,94.5 C37.5,93.7 38.2,85.5 38.1,81.0 C37.9,76.6 35.5,72.2 34.5,67.6 C33.5,63.0 32.3,59.0 31.8,53.3 C31.4,47.6 32.4,33.6 31.8,33.6Z'/>
<path fill='#d9806f' d='M37.6,54.2 C38.2,53.1 43.2,52.6 46.1,53.3 C49.1,54.0 54.9,57.3 55.5,58.7 C56.1,60.1 51.9,61.6 49.7,61.8 C47.6,62.0 44.6,61.3 42.6,60.0 C40.5,58.7 37.0,55.3 37.6,54.2Z'/>
<path fill='#f6ebe6' d='M39.9,55.5 C40.5,55.0 43.9,54.7 46.1,55.3 C48.4,55.8 53.0,58.1 53.3,58.8 C53.6,59.6 49.7,59.8 47.9,59.7 C46.1,59.6 43.9,58.9 42.6,58.2 C41.2,57.5 39.3,56.0 39.9,55.5Z'/>
<path fill='#5a6472' d='M38.1,35.8 C38.5,35.4 41.4,35.1 42.6,35.4 C43.7,35.6 45.2,36.9 44.8,37.4 C44.4,37.8 41.4,38.2 40.3,37.9 C39.2,37.6 37.7,36.3 38.1,35.8Z'/>
<path fill='#5a6472' d='M58.2,41.2 C58.7,40.8 61.9,40.8 63.1,41.2 C64.4,41.7 66.3,43.4 65.8,43.9 C65.4,44.3 61.7,44.3 60.5,43.9 C59.2,43.4 57.8,41.7 58.2,41.2Z'/>
<path fill='none' stroke='#6e4630' stroke-width='1.6' d='M57.8,37.2 L64.9,38.1 L70.3,41.7'/>
<path fill='#1f2a31' d='M30.0,97.2 C30.3,94.9 35.4,93.4 38.1,93.6 C40.8,93.7 42.7,98.2 46.1,98.1 C49.6,97.9 55.1,93.3 58.7,92.7 C62.2,92.1 65.2,92.7 67.6,94.5 C70.0,96.3 74.5,101.0 73.0,103.4 C71.5,105.8 64.8,108.2 58.7,108.8 C52.6,109.4 41.1,109.0 36.3,107.0 C31.5,105.1 29.7,99.4 30.0,97.2Z'/>
</g></g></svg>
</div></body></html>
